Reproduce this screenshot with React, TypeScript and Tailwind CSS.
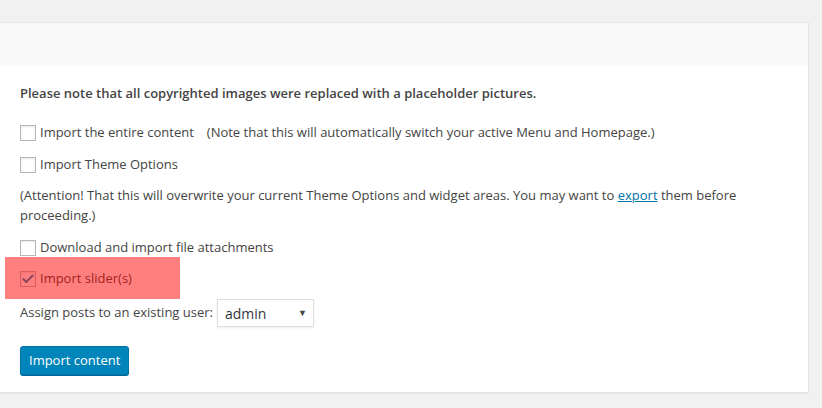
import { Check } from 'lucide-react'

const font = { fontFamily: '"Open Sans", "Noto Sans", sans-serif' }

function Box({ checked = false }: { checked?: boolean }) {
  return (
    <span className="w-4 h-4 shrink-0 flex items-center justify-center border border-[#b4b9be] bg-white shadow-[inset_0_1px_2px_rgba(0,0,0,0.1)]">
      {checked && <Check size={14} strokeWidth={3.5} className="text-[#1e8cbe]" />}
    </span>
  )
}

function Option({ label, note, checked }: { label: string; note?: string; checked?: boolean }) {
  return (
    <label className="flex items-center gap-[4px] h-[20px]">
      <Box checked={checked} />
      <span>{label}</span>
      {note && <span className="ml-[9px]">{note}</span>}
    </label>
  )
}

export default function App() {
  return (
    <div
      className="w-[822px] h-[408px] bg-[#f1f1f1] pt-[22px] text-[13px] text-[#444] overflow-hidden"
      style={font}
    >
      <div className="w-[810px] ml-[-1px] h-[371px] bg-white border border-[#e5e5e5] shadow-[0_1px_1px_rgba(0,0,0,0.04)]">
        <div className="h-[43px] bg-[#f9f9f9]" />

        <div className="px-[20px] pt-[17px]">
          <p className="font-semibold leading-[20px]">
            Please note that all copyrighted images were replaced with a placeholder pictures.
          </p>

          <div className="mt-[20px] flex flex-col gap-[12px]">
            <Option
              label="Import the entire content"
              note="(Note that this will automatically switch your active Menu and Homepage.)"
            />
            <Option label="Import Theme Options" />
          </div>

          <p className="mt-[10px] leading-[20px]">
            (Attention! That this will overwrite your current Theme Options and widget areas. You may want to{' '}
            <a href="#" className="text-[#0073aa] underline">export</a> them before proceeding.)
          </p>

          <div className="mt-[13px] flex flex-col gap-[11px]">
            <Option label="Download and import file attachments" />
            <div className="relative">
              <Option label="Import slider(s)" checked />
              {/* red highlight marker */}
              <div className="absolute left-[-15px] top-[-12px] w-[175px] h-[42px] bg-[rgba(255,0,0,0.5)]" />
            </div>
          </div>

          <div className="mt-[10px] flex items-center">
            <span>Assign posts to an existing user:</span>
            <div className="ml-[4px] w-[97px] h-[28px] border border-[#ddd] bg-white flex items-center justify-between pl-[7px] pr-[6px] shadow-[0_1px_2px_rgba(0,0,0,0.07)]">
              <span className="text-[14px] text-[#32373c]">admin</span>
              <span className="text-[9px] text-[#444]">▼</span>
            </div>
          </div>

          <button className="mt-[19px] h-[29px] px-[8px] rounded-[3px] bg-[#0085ba] border border-[#0073aa] text-white text-[13px] shadow-[0_1px_0_#006799]">
            Import content
          </button>
        </div>
      </div>
    </div>
  )
}
